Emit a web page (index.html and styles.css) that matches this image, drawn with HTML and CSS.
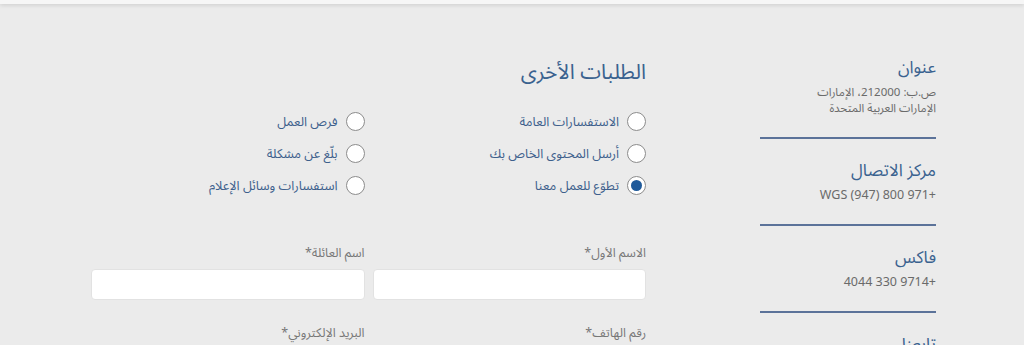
FILE: index.html
```html
<!DOCTYPE html>
<html lang="ar" dir="rtl">
<head>
<meta charset="utf-8">
<title>اتصل بنا</title>
<link rel="stylesheet" href="styles.css">
</head>
<body>
<div class="topbar"></div>
<div class="page">
  <aside class="contact">
    <section class="block">
      <h3 class="block-title">عنوان</h3>
      <p class="block-text">ص.ب: 212000، الإمارات<br>الإمارات العربية المتحدة</p>
    </section>
    <section class="block">
      <h3 class="block-title">مركز الاتصال</h3>
      <p class="block-text"><span class="num" dir="ltr">WGS (947) 800 971+</span></p>
    </section>
    <section class="block">
      <h3 class="block-title">فاكس</h3>
      <p class="block-text"><span class="num" dir="ltr">4044 330 9714+</span></p>
    </section>
    <section class="block last">
      <h3 class="block-title">تابعنا</h3>
    </section>
  </aside>
  <main class="form">
    <h2 class="form-title">الطلبات الأخرى</h2>
    <div class="radios">
      <label class="radio"><span class="circle"></span><span>الاستفسارات العامة</span></label>
      <label class="radio"><span class="circle"></span><span>فرص العمل</span></label>
      <label class="radio"><span class="circle"></span><span>أرسل المحتوى الخاص بك</span></label>
      <label class="radio"><span class="circle"></span><span>بلّغ عن مشكلة</span></label>
      <label class="radio"><span class="circle checked"></span><span>تطوّع للعمل معنا</span></label>
      <label class="radio"><span class="circle"></span><span>استفسارات وسائل الإعلام</span></label>
    </div>
    <div class="fields">
      <div class="field">
        <div class="field-label">الاسم الأول*</div>
        <div class="input"></div>
      </div>
      <div class="field">
        <div class="field-label">اسم العائلة*</div>
        <div class="input"></div>
      </div>
      <div class="field">
        <div class="field-label">رقم الهاتف*</div>
        <div class="input"></div>
      </div>
      <div class="field">
        <div class="field-label">البريد الإلكتروني*</div>
        <div class="input"></div>
      </div>
    </div>
  </main>
</div>
</body>
</html>
```

FILE: styles.css
```css
* { box-sizing: border-box; }
html, body {
  margin: 0;
  padding: 0;
  background: #ebebeb;
  font-family: "Noto Sans Arabic", "DejaVu Sans", sans-serif;
  overflow: hidden;
}
.topbar {
  height: 4px;
  background: #f6f6f6;
  box-shadow: 0 1px 4px rgba(0, 0, 0, 0.14);
  position: relative;
}
.page {
  display: flex;
  gap: 114px;
  padding: 52px 88px 0 91px;
}
.contact {
  width: 176px;
  flex: none;
}
.block {
  padding: 20px 0 21px;
  border-bottom: 2px solid #5b7299;
}
.block:first-child { padding-top: 0; }
.block.last { border-bottom: none; }
.block-title {
  margin: 0;
  font-size: 17px;
  font-weight: normal;
  line-height: 24px;
  color: #3a628f;
}
.block-text {
  margin: 4px 0 0;
  font-size: 11.5px;
  line-height: 16px;
  color: #6a6a6a;
}
.num {
  font-size: 12.5px;
}
.form {
  flex: 1;
}
.form-title {
  margin: 2px 0 0;
  font-size: 21px;
  font-weight: normal;
  line-height: 28px;
  color: #3a628f;
}
.radios {
  display: grid;
  grid-template-columns: 1fr 1fr;
  column-gap: 8px;
  row-gap: 8px;
  margin-top: 23px;
}
.radio {
  display: flex;
  align-items: center;
  gap: 8px;
  height: 24px;
  font-size: 12.8px;
  color: #3d5f8c;
}
.circle {
  width: 19px;
  height: 19px;
  border-radius: 50%;
  border: 1px solid #8c8c8c;
  background: #fff;
  flex: none;
  position: relative;
}
.circle.checked::after {
  content: "";
  position: absolute;
  left: 3px;
  top: 3px;
  width: 11px;
  height: 11px;
  border-radius: 50%;
  background: #1f5a9a;
}
.fields {
  display: grid;
  grid-template-columns: 1fr 1fr;
  column-gap: 8px;
  row-gap: 24px;
  margin-top: 47px;
}
.field-label {
  font-size: 12.5px;
  line-height: 18px;
  color: #777;
  margin-bottom: 7px;
}
.input {
  height: 31px;
  background: #fff;
  border-radius: 4px;
  border: 1px solid #e2e2e2;
}
```
